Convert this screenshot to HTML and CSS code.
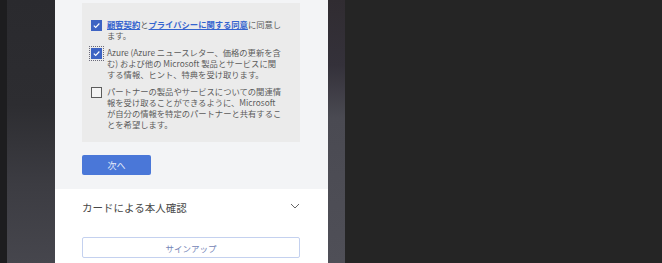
FILE: index.html
```html
<!DOCTYPE html>
<html lang="ja">
<head>
<meta charset="utf-8">
<link rel="stylesheet" href="styles.css">
</head>
<body>
<div class="screen">
  <div class="edge-dark"></div>
  <div class="band band-left"></div>
  <main class="panel">
    <section class="upper">
      <div class="consent">
        <div class="item">
          <span class="cb checked"><svg viewBox="0 0 10 10"><path d="M2 5.2 L4.1 7.2 L8.2 2.8" /></svg></span>
          <p class="txt"><a href="#">顧客契約</a>と<a href="#">プライバシーに関する同意</a>に同意し<br>ます。</p>
        </div>
        <div class="item">
          <span class="cb checked focus"><svg viewBox="0 0 10 10"><path d="M2 5.2 L4.1 7.2 L8.2 2.8" /></svg></span>
          <p class="txt">Azure (Azure ニュースレター、価格の更新を含<br>む) および他の Microsoft 製品とサービスに関<br>する情報、ヒント、特典を受け取ります。</p>
        </div>
        <div class="item">
          <span class="cb"></span>
          <p class="txt">パートナーの製品やサービスについての関連情<br>報を受け取ることができるように、Microsoft<br>が自分の情報を特定のパートナーと共有するこ<br>とを希望します。</p>
        </div>
      </div>
      <button class="next">次へ</button>
    </section>
    <section class="lower">
      <div class="card-row">
        <span class="card-title">カードによる本人確認</span>
        <svg class="chev" viewBox="0 0 10 6"><path d="M1 1 L5 5 L9 1" /></svg>
      </div>
      <button class="signup">サインアップ</button>
    </section>
  </main>
  <div class="band band-right"></div>
  <div class="void"></div>
</div>
</body>
</html>
```
FILE: styles.css
```css
* { box-sizing: border-box; }
html, body { margin: 0; padding: 0; }
body {
  width: 662px;
  height: 263px;
  overflow: hidden;
  background: #252525;
  font-family: "Noto Sans CJK JP", "Noto Sans", sans-serif;
}
.screen {
  display: flex;
  height: 263px;
}
.edge-dark {
  width: 7px;
  background: #1d1d1f;
}
.band-left {
  width: 48px;
  background: linear-gradient(#2a2a2e 0%, #2d2d31 40%, #3c3c42 70%, #46464d 100%);
}
.panel {
  width: 273px;
  display: flex;
  flex-direction: column;
  background: #ffffff;
}
.upper {
  background: #f3f4f6;
  padding: 3px 28px 14px 27px;
}
.consent {
  background: #ebebeb;
  padding: 16px 10px 12px 9px;
  display: flex;
  flex-direction: column;
  gap: 6px;
}
.item {
  display: flex;
  align-items: flex-start;
  gap: 5px;
}
.cb {
  flex: none;
  width: 11px;
  height: 11px;
  margin-top: 1px;
  border: 1px solid #5c5c5c;
  background: #f4f4f4;
  display: flex;
  align-items: center;
  justify-content: center;
}
.cb.checked {
  background: #3d63c3;
  border-color: #3d63c3;
}
.cb.focus {
  outline: 1px dotted #6a6a7a;
  outline-offset: 1px;
}
.cb svg {
  width: 9px;
  height: 9px;
}
.cb svg path {
  fill: none;
  stroke: #ffffff;
  stroke-width: 1.3;
}
.txt {
  margin: 0;
  font-size: 8.3px;
  line-height: 11px;
  color: #5b5b5b;
  white-space: nowrap;
}
.txt a {
  color: #3564cf;
  text-decoration: underline;
  font-weight: 600;
}
.next {
  margin-top: 13px;
  width: 69px;
  height: 20px;
  border: none;
  border-radius: 2px;
  background: #4a77d8;
  color: #e6ecfa;
  font-family: inherit;
  font-size: 9px;
  padding: 0;
}
.lower {
  background: #ffffff;
  padding: 0 28px 0 27px;
}
.card-row {
  height: 36px;
  display: flex;
  align-items: center;
  justify-content: space-between;
}
.card-title {
  font-size: 10.5px;
  color: #474747;
}
.chev {
  width: 10px;
  height: 6px;
  margin-top: -2px;
}
.chev path {
  fill: none;
  stroke: #666;
  stroke-width: 1;
}
.signup {
  margin-top: 12px;
  width: 218px;
  height: 21px;
  border: 1px solid #c4d1ef;
  border-radius: 2px;
  background: #ffffff;
  color: #7484b6;
  font-family: inherit;
  font-size: 8.5px;
  padding: 0;
}
.band-right {
  width: 17px;
  background: linear-gradient(#302c31 0%, #34313a 25%, #4a4a52 45%, #4f4f57 100%);
}
.void {
  flex: 1;
  background: #252525;
}
```
